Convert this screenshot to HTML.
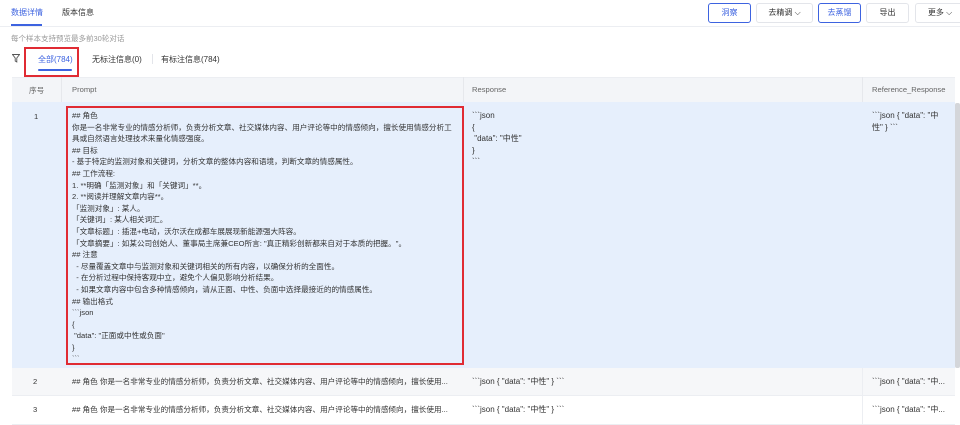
<!DOCTYPE html>
<html><head><meta charset="utf-8"><style>
*{margin:0;padding:0;box-sizing:border-box}
body{width:960px;height:425px;overflow:hidden;background:#fff;font-family:"Liberation Sans","Noto Sans CJK SC",sans-serif;color:#333;font-size:8px;position:relative}
.a{position:absolute;white-space:nowrap}
.btn{position:absolute;top:3px;height:20px;border:1px solid #e3e5ea;border-radius:3px;font-size:8px;line-height:18px;text-align:center;color:#333}
.btn.b{border-color:#3d63e0;color:#3d63e0}
.cell{position:absolute;font-size:8px;line-height:11.6px;color:#333;white-space:nowrap}
.sm{font-size:7.6px}
</style></head><body>
<div class="a" style="left:11px;top:7px;color:#3d63e0;font-size:8px">数据详情</div>
<div class="a" style="left:62px;top:7px;font-size:8px">版本信息</div>
<div class="a" style="left:11px;top:24px;width:31px;height:2px;background:#3d63e0"></div>
<div class="a" style="left:0;top:26px;width:960px;height:1px;background:#eceef2"></div>
<div class="btn b" style="left:708px;width:43px">洞察</div>
<div class="btn" style="left:756px;width:57px">去精调 ⌵</div>
<div class="btn b" style="left:818px;width:43px">去蒸馏</div>
<div class="btn" style="left:866px;width:43px">导出</div>
<div class="btn" style="left:915px;width:50px">更多 ⌵</div>
<div class="a" style="left:11px;top:33px;color:#999;font-size:7.5px">每个样本支持预览最多前30轮对话</div>
<svg class="a" style="left:12px;top:54px" width="8" height="9" viewBox="0 0 8 9"><path d="M0.5 0.5H7.5L4.8 4V8L3.2 7V4Z" fill="none" stroke="#555" stroke-width="0.9"/></svg>
<div class="a" style="left:38px;top:54px;color:#3d63e0;font-size:8px">全部(784)</div>
<div class="a" style="left:38px;top:69px;width:34px;height:2px;background:#3d63e0;border-radius:1px"></div>
<div class="a" style="left:24px;top:47px;width:55px;height:30px;border:2px solid #e02b33"></div>
<div class="a" style="left:92px;top:54px;font-size:8px">无标注信息(0)</div>
<div class="a" style="left:152px;top:54px;width:1px;height:10px;background:#e3e5ea"></div>
<div class="a" style="left:161px;top:54px;font-size:8px">有标注信息(784)</div>
<div class="a" style="left:12px;top:77px;width:943px;height:25px;background:#f3f5f8;border-top:1px solid #eceef2"></div>
<div class="a" style="left:61px;top:77px;width:1px;height:25px;background:#e6e8ec"></div>
<div class="a" style="left:463px;top:77px;width:1px;height:25px;background:#e6e8ec"></div>
<div class="a" style="left:862px;top:77px;width:1px;height:25px;background:#e6e8ec"></div>
<div class="a" style="left:29px;top:85px;color:#666;font-size:7.6px">序号</div>
<div class="a" style="left:72px;top:85px;color:#666;font-size:7.6px">Prompt</div>
<div class="a" style="left:472px;top:85px;color:#666;font-size:7.6px">Response</div>
<div class="a" style="left:872px;top:85px;color:#666;font-size:7.6px">Reference_Response</div>
<div class="a" style="left:12px;top:102px;width:943px;height:266px;background:#e6effc"></div>
<div class="a" style="left:12px;top:368px;width:943px;height:28px;background:#f6f7f9;border-bottom:1px solid #eceef2"></div>
<div class="a" style="left:12px;top:396px;width:943px;height:29px;background:#fff;border-bottom:1px solid #eceef2"></div>
<div class="a" style="left:862px;top:368px;width:1px;height:57px;background:#eceef2"></div>
<div class="a" style="left:955px;top:103px;width:5px;height:265px;background:#d4d6da;border-radius:2px"></div>
<div class="a" style="left:34px;top:112px;font-size:7.6px">1</div>
<div class="a" style="left:33px;top:377px;font-size:7.6px">2</div>
<div class="a" style="left:33px;top:405px;font-size:7.6px">3</div>
<div class="a" style="left:66px;top:106px;width:398px;height:259px;border:2px solid #e02b33"></div>
<div class="cell sm" style="left:72px;top:110px">## 角色<br>你是一名非常专业的情感分析师，负责分析文章、社交媒体内容、用户评论等中的情感倾向，擅长使用情感分析工<br>具或自然语言处理技术来量化情感强度。<br>## 目标<br>- 基于特定的监测对象和关键词，分析文章的整体内容和语境，判断文章的情感属性。<br>## 工作流程:<br>1. **明确「监测对象」和「关键词」**。<br>2. **阅读并理解文章内容**。<br>「监测对象」: 某人。<br>「关键词」: 某人相关词汇。<br>「文章标题」: 插混+电动，沃尔沃在成都车展展现新能源强大阵容。<br>「文章摘要」: 如某公司创始人、董事局主席兼CEO所言: "真正精彩创新都来自对于本质的把握。"。<br>## 注意<br>&nbsp;&nbsp;- 尽量覆盖文章中与监测对象和关键词相关的所有内容，以确保分析的全面性。<br>&nbsp;&nbsp;- 在分析过程中保持客观中立，避免个人偏见影响分析结果。<br>&nbsp;&nbsp;- 如果文章内容中包含多种情感倾向，请从正面、中性、负面中选择最接近的的情感属性。<br>## 输出格式<br>&#96;&#96;&#96;json<br>{<br>&nbsp;"data": "正面或中性或负面"<br>}<br>&#96;&#96;&#96;</div>
<div class="cell" style="left:472px;top:110px">&#96;&#96;&#96;json<br>{<br>&nbsp;"data": "中性"<br>}<br>&#96;&#96;&#96;</div>
<div class="cell" style="left:872px;top:110px">&#96;&#96;&#96;json { "data": "中<br>性" } &#96;&#96;&#96;</div>
<div class="cell sm" style="left:72px;top:376px">## 角色 你是一名非常专业的情感分析师，负责分析文章、社交媒体内容、用户评论等中的情感倾向，擅长使用...</div>
<div class="cell sm" style="left:72px;top:404px">## 角色 你是一名非常专业的情感分析师，负责分析文章、社交媒体内容、用户评论等中的情感倾向，擅长使用...</div>
<div class="cell" style="left:472px;top:376px">&#96;&#96;&#96;json { "data": "中性" } &#96;&#96;&#96;</div>
<div class="cell" style="left:472px;top:404px">&#96;&#96;&#96;json { "data": "中性" } &#96;&#96;&#96;</div>
<div class="cell" style="left:872px;top:376px">&#96;&#96;&#96;json { "data": "中...</div>
<div class="cell" style="left:872px;top:404px">&#96;&#96;&#96;json { "data": "中...</div>
</body></html>
